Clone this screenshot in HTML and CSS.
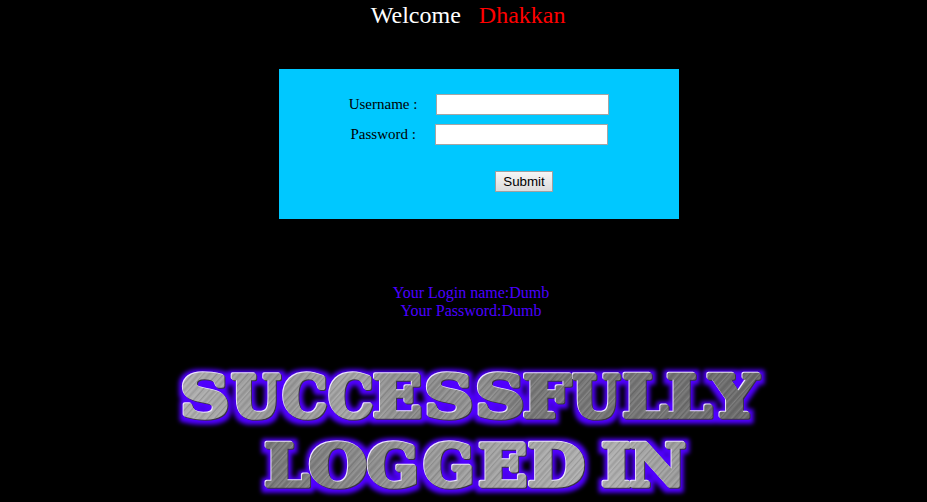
FILE: index.html
```html
<!DOCTYPE html>
<html lang="en">
<head>
<meta charset="utf-8">
<title>Login</title>
<link rel="stylesheet" href="styles.css">
</head>
<body>
<header class="welcome"><span>Welcome</span><span class="name">Dhakkan</span></header>
<form class="login">
  <div class="row user"><label for="uname">Username :</label><input id="uname" type="text"></div>
  <div class="row pass"><label for="passwd">Password :</label><input id="passwd" type="text"></div>
  <button type="button">Submit</button>
</form>
<div class="result">Your Login name:Dumb<br>Your Password:Dumb</div>
<svg class="banner" width="600" height="142" viewBox="171 360 600 142">
  <defs>
    <linearGradient id="metal1" gradientUnits="userSpaceOnUse" x1="180" y1="0" x2="762" y2="0">
      <stop offset="0" stop-color="#b0b0b0"/><stop offset=".17" stop-color="#969696"/>
      <stop offset=".3" stop-color="#a5a5a5"/><stop offset=".4" stop-color="#888"/>
      <stop offset=".5" stop-color="#929292"/><stop offset=".6" stop-color="#777"/>
      <stop offset=".8" stop-color="#747474"/><stop offset="1" stop-color="#696969"/>
    </linearGradient>
    <linearGradient id="metal2" gradientUnits="userSpaceOnUse" x1="264" y1="0" x2="687" y2="0">
      <stop offset="0" stop-color="#777"/><stop offset=".15" stop-color="#828282"/>
      <stop offset=".35" stop-color="#979797"/><stop offset=".6" stop-color="#a6a6a6"/>
      <stop offset=".8" stop-color="#b0b0b0"/><stop offset="1" stop-color="#999"/>
    </linearGradient>
    <pattern id="brush" width="23" height="40" patternUnits="userSpaceOnUse" patternTransform="rotate(42)">
      <path d="M1 0V40M4.2 0V40M9.6 0V40M12 0V40M18.3 0V40" stroke="#fff" stroke-opacity=".22" stroke-width=".7"/>
      <path d="M2.7 0V40M7 0V40M10.8 0V40M15 0V40M20.5 0V40" stroke="#222" stroke-opacity=".26" stroke-width=".7"/>
    </pattern>
    <pattern id="steel" x="171" y="360" width="600" height="142" patternUnits="userSpaceOnUse">
      <g transform="translate(-171 -360)">
        <rect x="171" y="360" width="600" height="71" fill="url(#metal1)"/>
        <rect x="171" y="431" width="600" height="71" fill="url(#metal2)"/>
        <rect x="171" y="360" width="600" height="142" fill="url(#brush)"/>
      </g>
    </pattern>
    <filter id="glow" filterUnits="userSpaceOnUse" x="171" y="360" width="600" height="142" color-interpolation-filters="sRGB">
      <feMorphology in="SourceAlpha" operator="dilate" radius="4" result="fat"/>
      <feGaussianBlur in="fat" stdDeviation="2.1" result="soft"/>
      <feOffset in="soft" dx=".3" dy=".5" result="softLow"/>
      <feFlood flood-color="#5000ff"/>
      <feComposite in2="softLow" operator="in" result="halo"/>
      <feOffset in="SourceAlpha" dx="-.6" dy="-.6" result="up"/>
      <feFlood flood-color="#eee5ff"/>
      <feComposite in2="up" operator="in" result="light"/>
      <feOffset in="SourceAlpha" dx=".7" dy=".7" result="down"/>
      <feFlood flood-color="#393344"/>
      <feComposite in2="down" operator="in" result="shade"/>
      <feMerge><feMergeNode in="halo"/><feMergeNode in="shade"/><feMergeNode in="light"/><feMergeNode in="SourceGraphic"/></feMerge>
    </filter>
  </defs>
  <g class="lettering" filter="url(#glow)">
    <text y="417.2"><tspan x="180.5" textLength="49" lengthAdjust="spacingAndGlyphs">S</tspan><tspan x="231.5" textLength="49" lengthAdjust="spacingAndGlyphs">U</tspan><tspan x="282.5" textLength="45" lengthAdjust="spacingAndGlyphs">C</tspan><tspan x="328.5" textLength="45" lengthAdjust="spacingAndGlyphs">C</tspan><tspan x="373" textLength="49" lengthAdjust="spacingAndGlyphs">E</tspan><tspan x="424.5" textLength="49" lengthAdjust="spacingAndGlyphs">S</tspan><tspan x="475.5" textLength="49" lengthAdjust="spacingAndGlyphs">S</tspan><tspan x="523" textLength="48" lengthAdjust="spacingAndGlyphs">F</tspan><tspan x="572.5" textLength="47.5" lengthAdjust="spacingAndGlyphs">U</tspan><tspan x="622.5" textLength="45.5" lengthAdjust="spacingAndGlyphs">L</tspan><tspan x="666.5" textLength="45.5" lengthAdjust="spacingAndGlyphs">L</tspan><tspan x="710" textLength="48" lengthAdjust="spacingAndGlyphs">Y</tspan></text>
    <text y="486.4"><tspan x="264.5" textLength="45" lengthAdjust="spacingAndGlyphs">L</tspan><tspan x="309" textLength="58" lengthAdjust="spacingAndGlyphs">O</tspan><tspan x="367" textLength="52" lengthAdjust="spacingAndGlyphs">G</tspan><tspan x="423.5" textLength="51" lengthAdjust="spacingAndGlyphs">G</tspan><tspan x="478.5" textLength="49" lengthAdjust="spacingAndGlyphs">E</tspan><tspan x="528" textLength="57" lengthAdjust="spacingAndGlyphs">D</tspan> <tspan x="601.5" textLength="30" lengthAdjust="spacingAndGlyphs">I</tspan><tspan x="629.5" textLength="56.5" lengthAdjust="spacingAndGlyphs">N</tspan></text>
  </g>
</svg>
</body>
</html>
```
FILE: styles.css
```css
body { margin: 0; width: 927px; height: 502px; overflow: hidden; background: #000; font-family: "Liberation Serif", serif; }
.welcome { display: flex; gap: 18px; height: 69px; padding-left: 370.8px; box-sizing: border-box; color: #fff; font-size: 24px; line-height: 30px; }
.name { color: #f00; }
.login { width: 400px; height: 150px; margin: 0 0 0 279px; padding-top: 25px; box-sizing: border-box; background: #00c8ff; font-size: 15px; }
.row { display: flex; align-items: center; height: 21px; margin-bottom: 9px; color: #000; }
.user { padding-left: 69.7px; }
.pass { padding-left: 71.5px; }
.row label { width: 87.3px; line-height: 21px; }
.pass label { width: 84.5px; }
.row input { width: 173px; height: 21px; box-sizing: border-box; margin: 0; padding: 1px; border: 1px solid #a5a5a5; border-radius: 0; background: #fff; }
.login button { display: block; width: 58px; height: 21px; margin: 26px 0 0 216px; padding: 0; border: 1px solid #a0a0a0; border-radius: 0; background: linear-gradient(#f6f6f6, #dcdcdc); color: #000; font: 13.333px "Liberation Sans", sans-serif; }
.result { width: 942px; margin-top: 65px; color: #4b00ff; font-size: 16px; line-height: 18px; text-align: center; }
.banner { display: block; margin: 40px 0 0 171px; }
.lettering { font: bold 58px "DejaVu Serif", serif; fill: url(#steel); stroke: url(#steel); stroke-width: 3.6px; stroke-linejoin: round; }
```
